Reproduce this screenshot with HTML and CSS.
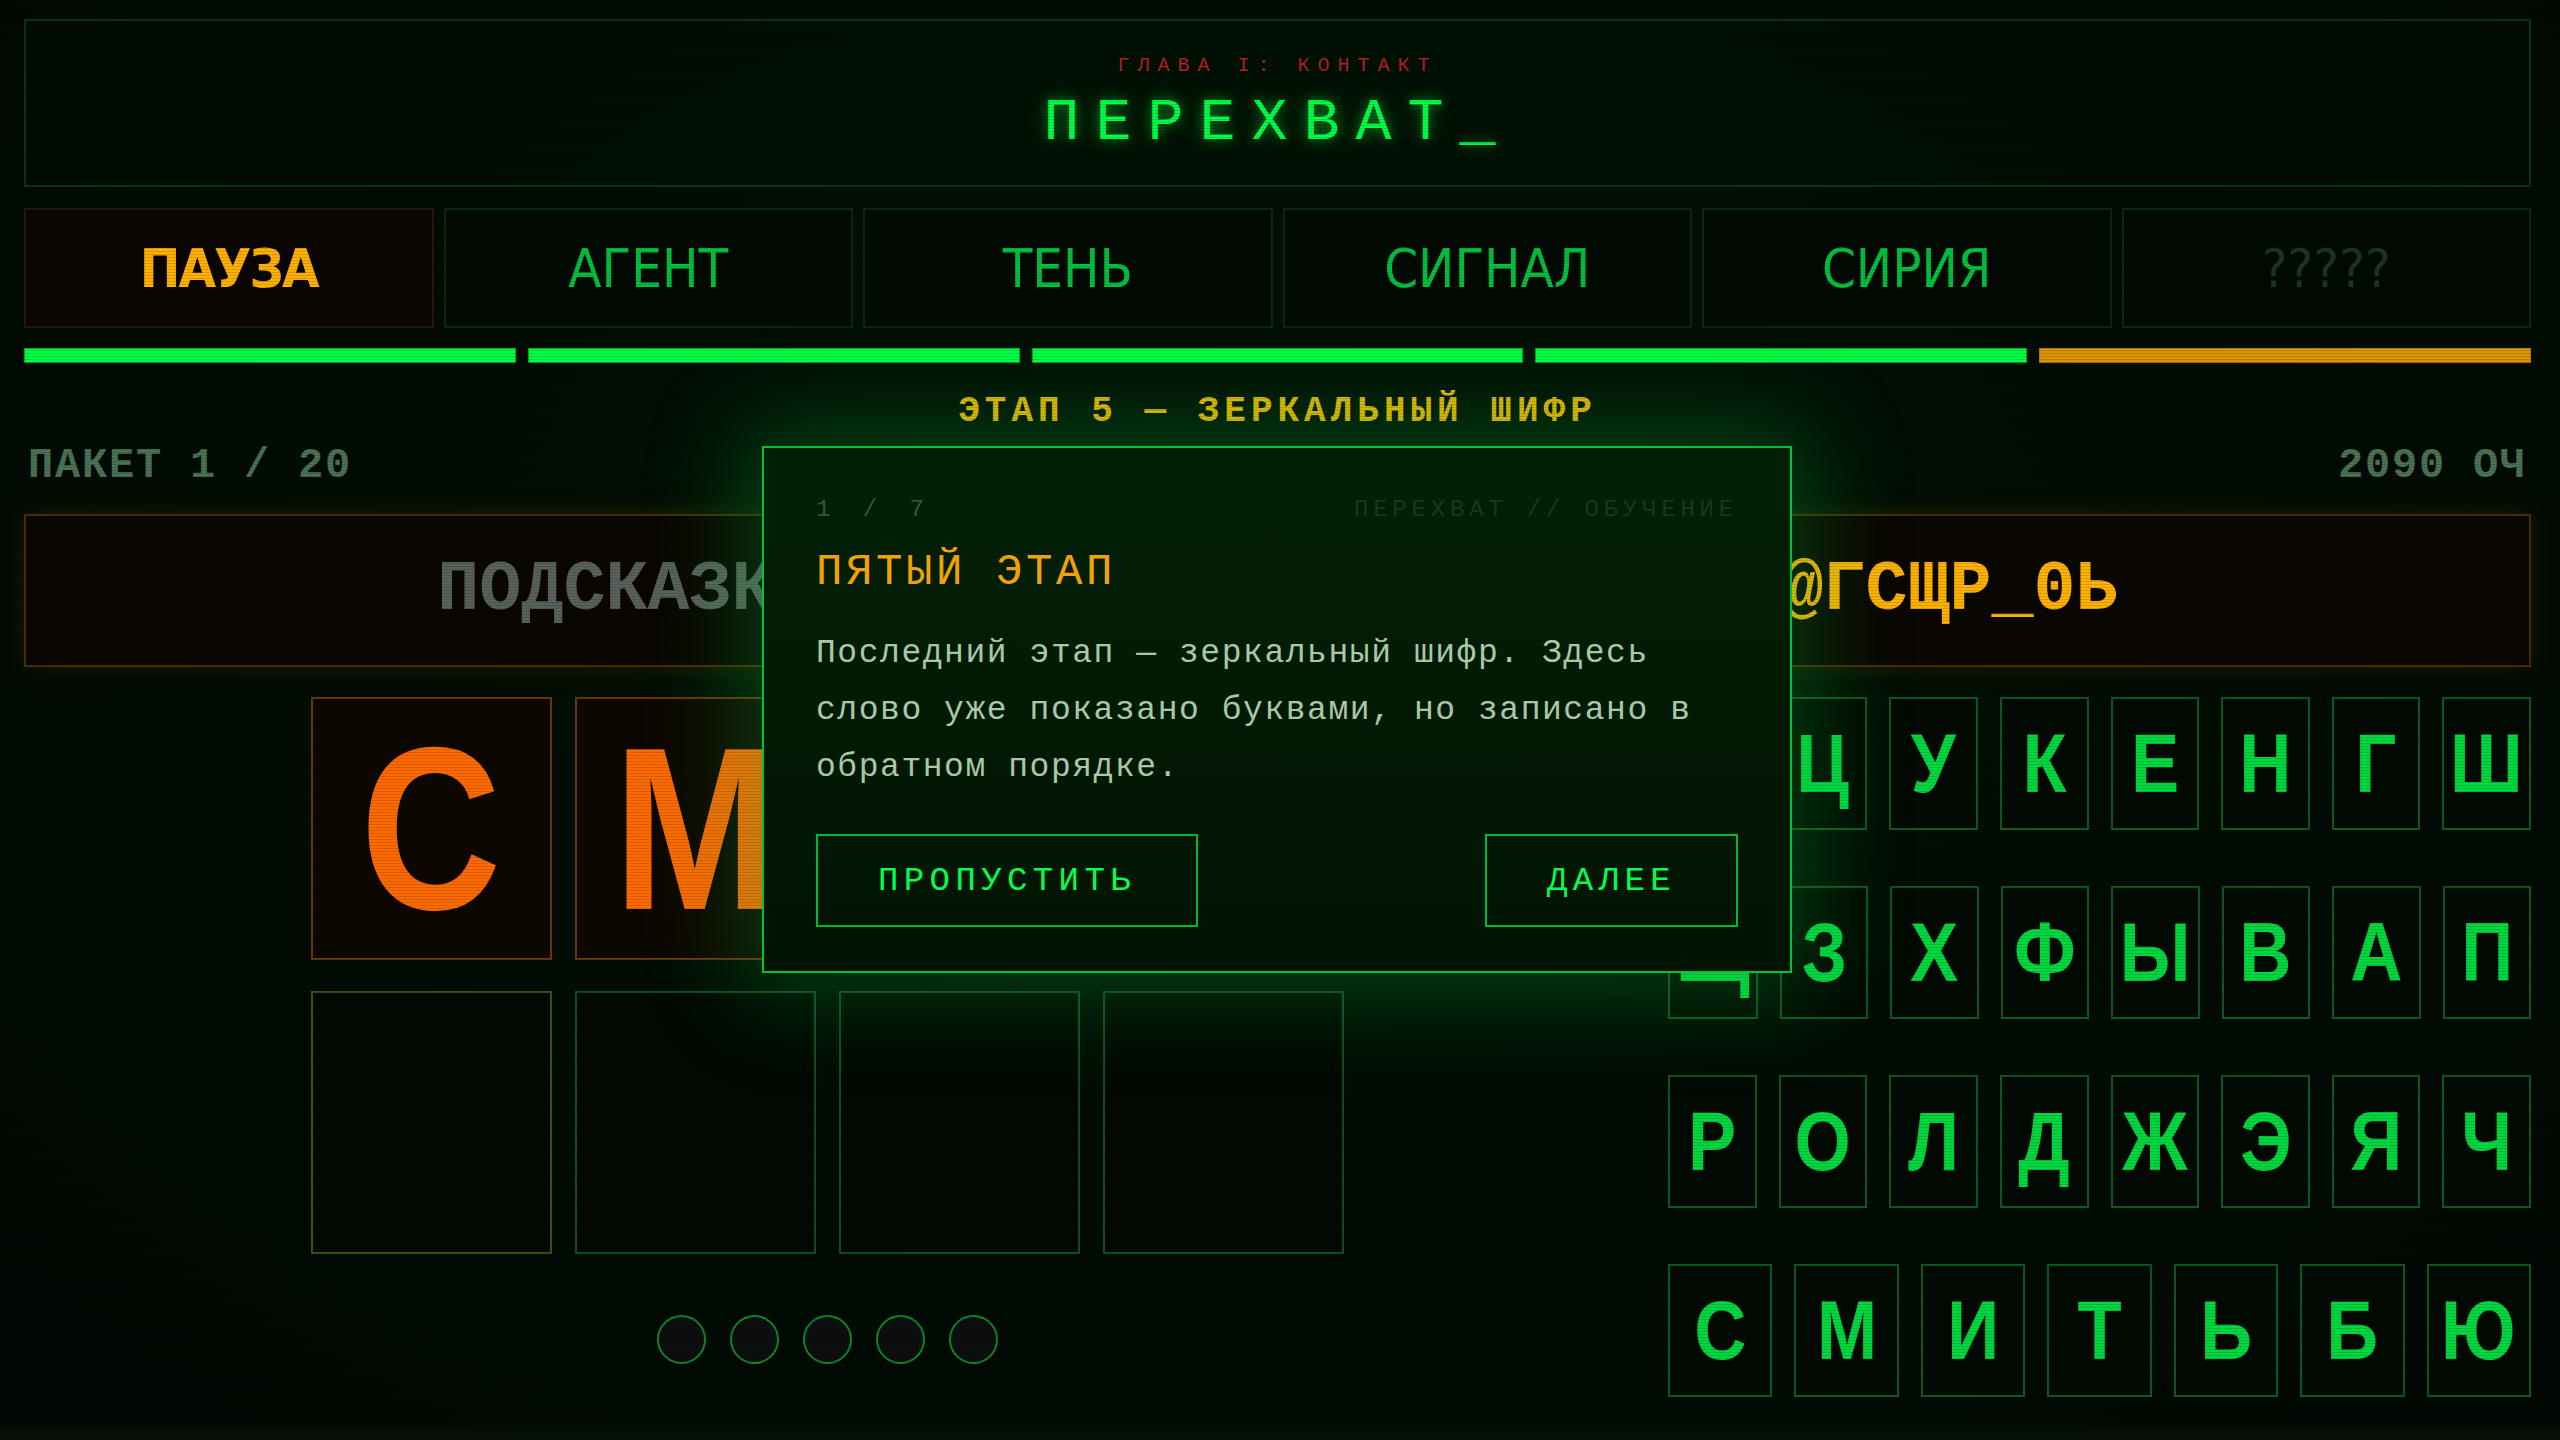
FILE: index.html
```
<!DOCTYPE html>
<html lang="ru">
<head>
    <meta charset="UTF-8">
    <meta name="viewport" content="width=device-width, initial-scale=1.0">
    <title>Перехват</title>
    <link rel="stylesheet" href="styles.css">
</head>
<body>

<div class="header">
    <div class="chapter">ГЛАВА I: КОНТАКТ</div>
    <h1 class="title">ПЕРЕХВАТ_</h1>
</div>

<div class="tabs">
    <div class="tab active">ПАУЗА</div>
    <div class="tab">АГЕНТ</div>
    <div class="tab">ТЕНЬ</div>
    <div class="tab">СИГНАЛ</div>
    <div class="tab">СИРИЯ</div>
    <div class="tab locked">?????</div>
</div>

<div class="progress">
    <div class="bar done"></div>
    <div class="bar done"></div>
    <div class="bar done"></div>
    <div class="bar done"></div>
    <div class="bar current"></div>
</div>

<div class="stage">ЭТАП 5 — ЗЕРКАЛЬНЫЙ ШИФР</div>

<div class="stats">
    <span>ПАКЕТ 1 / 20</span>
    <span>2090 ОЧ</span>
</div>

<div class="hint">
    <span class="hint-label">ПОДСКАЗКА: </span><span class="hint-code">ТАКРЕЗ_ЕЩЬЫЛ#ТЕДИВ_ЮЧ@ГСЩР_0Ь</span>
</div>

<div class="game">
    <div class="word-area">
        <div class="word-grid">
            <div class="slot filled"><span>С</span></div>
            <div class="slot filled"><span>М</span></div>
            <div class="slot filled"><span>Е</span></div>
            <div class="slot filled"><span>Р</span></div>
            <div class="slot next"></div>
            <div class="slot"></div>
            <div class="slot"></div>
            <div class="slot"></div>
        </div>
        <div class="lives">
            <span class="life"></span>
            <span class="life"></span>
            <span class="life"></span>
            <span class="life"></span>
            <span class="life"></span>
        </div>
    </div>

    <div class="keyboard">
        <div class="key-row">
            <button class="key"><span>Й</span></button>
            <button class="key"><span>Ц</span></button>
            <button class="key"><span>У</span></button>
            <button class="key"><span>К</span></button>
            <button class="key"><span>Е</span></button>
            <button class="key"><span>Н</span></button>
            <button class="key"><span>Г</span></button>
            <button class="key"><span>Ш</span></button>
        </div>
        <div class="key-row">
            <button class="key"><span>Щ</span></button>
            <button class="key"><span>З</span></button>
            <button class="key"><span>Х</span></button>
            <button class="key"><span>Ф</span></button>
            <button class="key"><span>Ы</span></button>
            <button class="key"><span>В</span></button>
            <button class="key"><span>А</span></button>
            <button class="key"><span>П</span></button>
        </div>
        <div class="key-row">
            <button class="key"><span>Р</span></button>
            <button class="key"><span>О</span></button>
            <button class="key"><span>Л</span></button>
            <button class="key"><span>Д</span></button>
            <button class="key"><span>Ж</span></button>
            <button class="key"><span>Э</span></button>
            <button class="key"><span>Я</span></button>
            <button class="key"><span>Ч</span></button>
        </div>
        <div class="key-row">
            <button class="key"><span>С</span></button>
            <button class="key"><span>М</span></button>
            <button class="key"><span>И</span></button>
            <button class="key"><span>Т</span></button>
            <button class="key"><span>Ь</span></button>
            <button class="key"><span>Б</span></button>
            <button class="key"><span>Ю</span></button>
        </div>
    </div>
</div>

<div class="tutorial">
    <div class="tutorial-meta">
        <span class="step">1 / 7</span>
        <span class="source">ПЕРЕХВАТ // ОБУЧЕНИЕ</span>
    </div>
    <h2 class="tutorial-title">ПЯТЫЙ ЭТАП</h2>
    <p class="tutorial-text">Последний этап — зеркальный шифр. Здесь слово уже показано буквами, но записано в обратном порядке.</p>
    <div class="tutorial-actions">
        <button class="tut-btn">ПРОПУСТИТЬ</button>
        <button class="tut-btn">ДАЛЕЕ</button>
    </div>
</div>

</body>
</html>
```

FILE: styles.css
```
html {
    background-color: #060e08;
}
body {
    margin: 0;
    padding: 19px 29px 0 24px;
    height: 1425px;
    box-sizing: border-box;
    overflow: hidden;
    font-family: "Liberation Mono", "DejaVu Sans Mono", monospace;
    color: #00c23e;
    background: radial-gradient(ellipse at 50% 40%, #021406 0%, #010c03 55%, #000702 100%);
    position: relative;
}
body::after {
    content: "";
    position: absolute;
    left: 0;
    top: 0;
    right: 0;
    bottom: 0;
    pointer-events: none;
    background: repeating-linear-gradient(0deg, rgba(0, 0, 0, 0.14) 0, rgba(0, 0, 0, 0.14) 1px, transparent 1px, transparent 3px);
}

/* header */
.header {
    height: 168px;
    box-sizing: border-box;
    border: 2px solid #0a3514;
    background-color: rgba(0, 20, 6, 0.35);
    text-align: center;
    padding-top: 33px;
}
.chapter {
    font-size: 20px;
    line-height: 24px;
    letter-spacing: 8px;
    color: #b3211f;
}
.title {
    margin: 10px 0 0;
    font-size: 60px;
    line-height: 70px;
    font-weight: normal;
    letter-spacing: 16px;
    color: #00ff48;
    text-shadow: 0 0 12px rgba(0, 255, 70, 0.55), 0 0 30px rgba(0, 255, 70, 0.25);
}

/* tabs */
.tabs {
    display: grid;
    grid-template-columns: repeat(6, 1fr);
    gap: 10px;
    margin-top: 21px;
}
.tab {
    height: 120px;
    box-sizing: border-box;
    border: 2px solid #0d2713;
    background-color: #010a02;
    display: flex;
    align-items: center;
    justify-content: center;
    font-family: "Liberation Sans Narrow", "DejaVu Sans Condensed", "Roboto Condensed", "Liberation Sans", sans-serif;
    font-size: 54px;
    color: #00c23e;
}
.tab.active {
    background-color: #0a0500;
    border-color: #2a1706;
    color: #ffb000;
    font-weight: bold;
    letter-spacing: -2px;
}
.tab.locked {
    color: #1c3522;
}

/* progress */
.progress {
    display: grid;
    grid-template-columns: repeat(5, 1fr);
    gap: 12px;
    margin-top: 20px;
}
.bar {
    height: 15px;
    box-sizing: border-box;
    border: 1px solid #00a832;
    background-color: #00ff44;
}
.bar.current {
    border-color: #b87a00;
    background-color: #d99600;
}

.stage {
    margin-top: 29px;
    text-align: center;
    font-size: 36px;
    line-height: 40px;
    font-weight: bold;
    letter-spacing: 5px;
    color: #e8b400;
}

.stats {
    display: flex;
    justify-content: space-between;
    margin-top: 10px;
    padding: 0 4px;
    font-size: 42px;
    line-height: 48px;
    font-weight: bold;
    letter-spacing: 1.8px;
    color: #4a7254;
}

/* hint */
.hint {
    margin-top: 24px;
    height: 153px;
    box-sizing: border-box;
    border: 2px solid #4a3000;
    background-color: #0a0600;
    box-shadow: 0 0 24px rgba(255, 150, 0, 0.12);
    display: flex;
    align-items: center;
    justify-content: center;
    font-size: 70px;
    line-height: 1;
    font-weight: bold;
    white-space: pre;
}
.hint-label {
    color: #59615c;
}
.hint-code {
    color: #ffb300;
}

/* game area */
.game {
    display: grid;
    grid-template-columns: 1fr 863px;
    gap: 38px;
    margin-top: 30px;
}
.word-area {
    display: flex;
    flex-direction: column;
    align-items: center;
}
.word-grid {
    display: grid;
    grid-template-columns: repeat(4, 241px);
    grid-auto-rows: 263px;
    column-gap: 23px;
    row-gap: 31px;
}
.slot {
    box-sizing: border-box;
    border: 2px solid #0c5120;
    background-color: #010902;
    display: flex;
    align-items: center;
    justify-content: center;
    font-family: "Liberation Sans", sans-serif;
    font-size: 232px;
    line-height: 1;
    font-weight: bold;
}
.slot span {
    display: inline-block;
    transform: scaleX(0.84);
}
.slot.filled {
    border-color: #6e3808;
    background-color: #0e0700;
    color: #ff6a00;
}
.slot.next {
    border-color: #3f5212;
}
.lives {
    display: flex;
    gap: 24px;
    margin-top: 61px;
}
.life {
    width: 49px;
    height: 49px;
    box-sizing: border-box;
    border: 2px solid #0a8a28;
    border-radius: 50%;
    background-color: #0d0f0f;
}

.keyboard {
    display: flex;
    flex-direction: column;
    gap: 56px;
}
.key-row {
    display: flex;
    gap: 22px;
}
.key {
    flex: 1;
    height: 133px;
    box-sizing: border-box;
    border: 2px solid #0b5a1f;
    background-color: #010a02;
    color: #00d840;
    font-family: "Liberation Sans", sans-serif;
    font-size: 84px;
    font-weight: bold;
    padding: 0;
    cursor: pointer;
}
.key span {
    display: inline-block;
    transform: scaleX(0.86);
}

/* tutorial popup */
.tutorial {
    position: absolute;
    top: 446px;
    left: 50%;
    margin-left: -518px;
    width: 1030px;
    box-sizing: border-box;
    padding: 47px 52px 44px;
    border: 2px solid #00c23a;
    background: linear-gradient(180deg, #032006 0%, #021404 100%);
    box-shadow: 0 0 90px 20px rgba(0, 200, 60, 0.28);
    z-index: 2;
}
.tutorial-meta {
    display: flex;
    justify-content: space-between;
    font-size: 24px;
    line-height: 30px;
}
.step {
    color: #2c5a36;
    letter-spacing: 9px;
}
.source {
    color: #133a1e;
    letter-spacing: 4.8px;
}
.tutorial-title {
    margin: 21px 0 0;
    font-size: 44px;
    line-height: 52px;
    font-weight: normal;
    letter-spacing: 3.6px;
    color: #f0a300;
}
.tutorial-text {
    margin: 27px 0 0;
    font-size: 33px;
    line-height: 57px;
    letter-spacing: 1.55px;
    color: #a8c8a6;
}
.tutorial-actions {
    display: flex;
    justify-content: space-between;
    margin-top: 38px;
}
.tut-btn {
    height: 93px;
    padding: 0 60px;
    border: 2px solid #00b838;
    background-color: transparent;
    color: #00ff50;
    font-family: "Liberation Mono", "DejaVu Sans Mono", monospace;
    font-size: 34px;
    letter-spacing: 5.4px;
    cursor: pointer;
}
```
